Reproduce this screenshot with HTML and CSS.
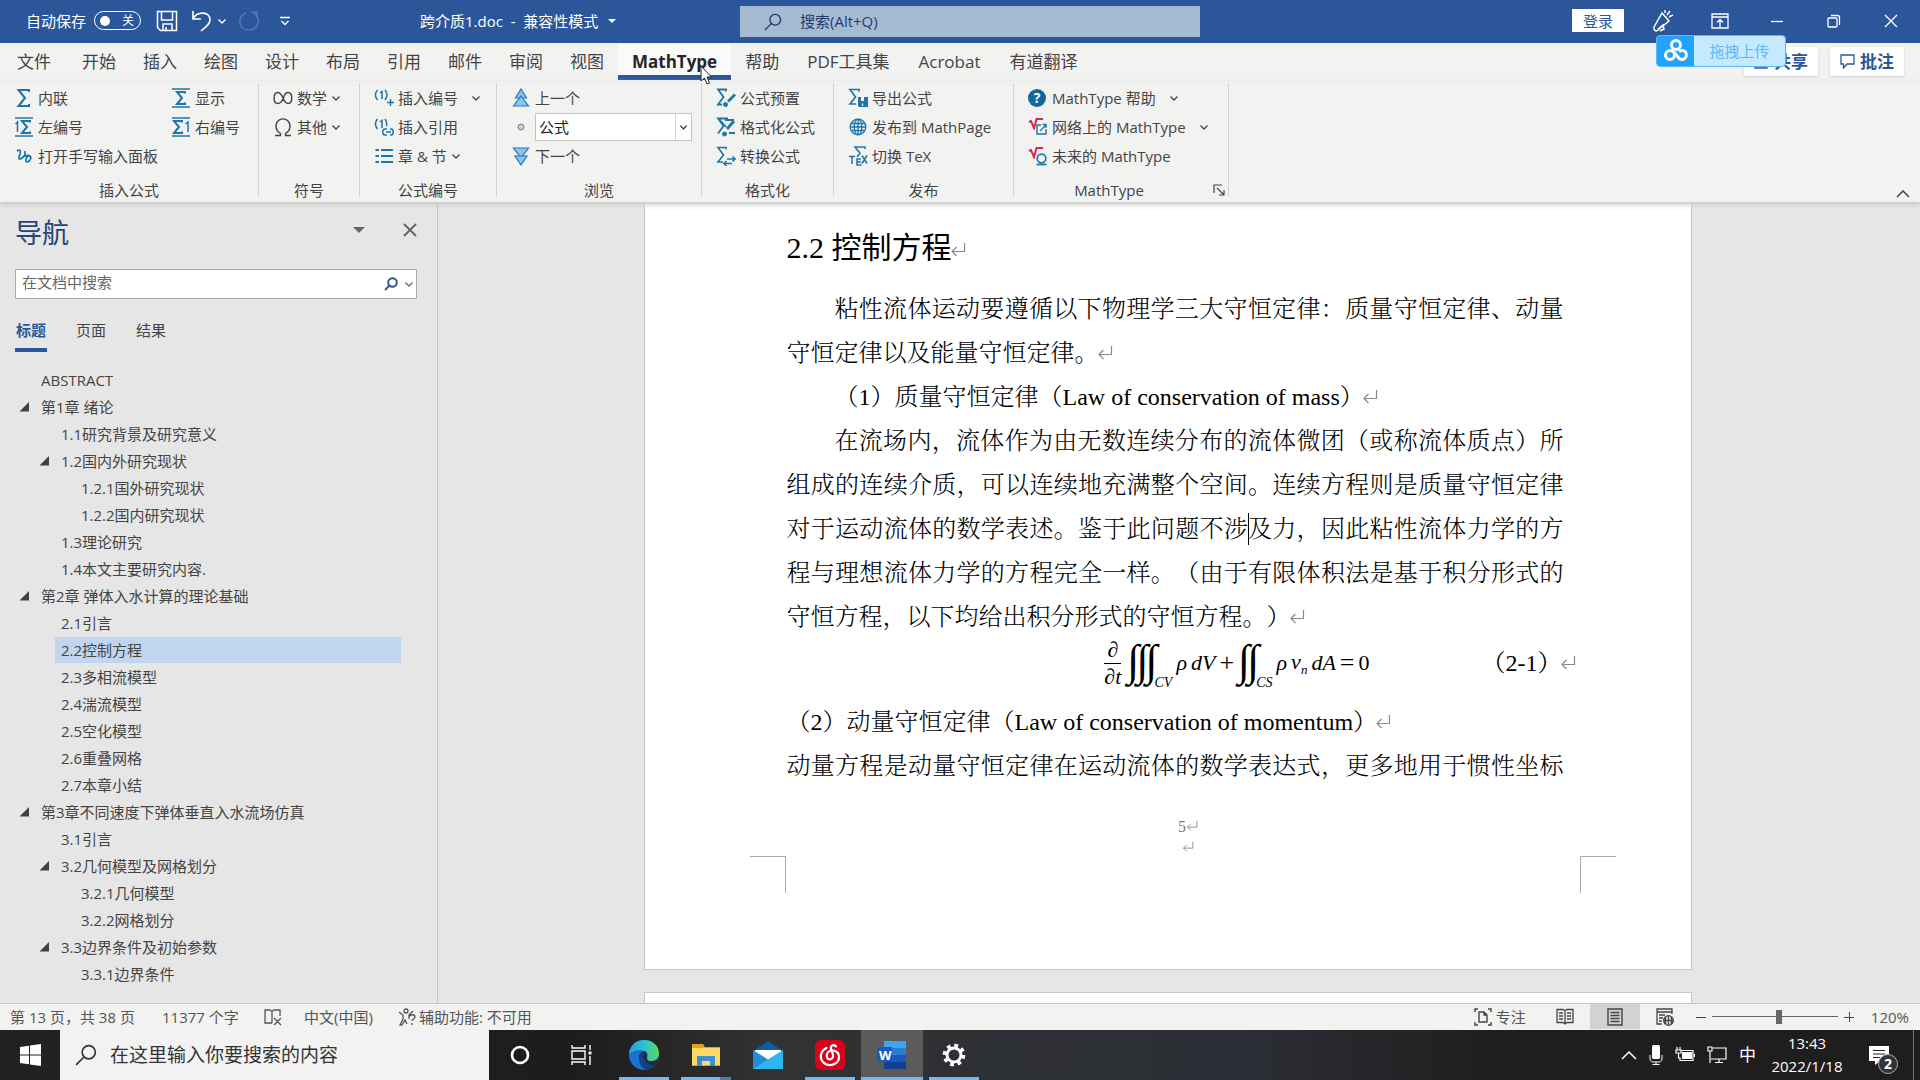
FILE: index.html
```html
<!DOCTYPE html>
<html lang="zh-CN">
<head>
<meta charset="utf-8">
<title>跨介质1.doc - Word</title>
<link rel="stylesheet" href="styles.css">
</head>
<body>
<svg class="defs" aria-hidden="true">
  <symbol id="chev" viewBox="0 0 10 10"><path d="M1.500 3.500 5 7l3.500-3.500" fill="none" stroke="currentColor" stroke-width="1.300"/></symbol>
  <symbol id="tri" viewBox="0 0 10 10"><path d="M0 2.500h10L5 7.500z" fill="currentColor"/></symbol>
  <symbol id="node" viewBox="0 0 10 10"><path d="M10 0v9.500H.5z" fill="#404040"/></symbol>
  <symbol id="lens" viewBox="0 0 20 20"><g fill="none" stroke="currentColor" stroke-width="1.500"><circle cx="12.500" cy="7.500" r="6"/><path d="M8.200 11.800 1 19"/></g></symbol>
  <symbol id="ret" viewBox="0 0 16 16"><g fill="none" stroke="#8a8a8a" stroke-width="1.200"><path d="M14.500 1v8.500H2"/><path d="M6.500 5 2 9.500 6.500 14"/></g></symbol>
  <symbol id="sigma" viewBox="0 0 20 20"><path d="M15 4V2H4.500l6.500 8-6.500 8H15v-2" fill="none" stroke="#1c77a8" stroke-width="2"/></symbol>
  <symbol id="sigbar" viewBox="0 0 20 20"><g fill="none" stroke="#1c77a8"><path d="M1 1h18M1 19h18" stroke-width="1.500"/><path d="M14 5.500V4H6l5 6-5 6h8v-1.500" stroke-width="2"/></g></symbol>
  <symbol id="sigleft" viewBox="0 0 20 20"><g fill="none" stroke="#1c77a8"><path d="M1 1h18M1 19h18" stroke-width="1.500"/><path d="M16 5.500V4H8l5 6-5 6h8v-1.500" stroke-width="2"/><path d="M1.500 7 3.500 5v10" stroke-width="1.500"/></g></symbol>
  <symbol id="sigright" viewBox="0 0 20 20"><g fill="none" stroke="#1c77a8"><path d="M1 1h18M1 19h18" stroke-width="1.500"/><path d="M11 5.500V4H3l5 6-5 6h8v-1.500" stroke-width="2"/><path d="M14.500 7 17 5v10" stroke-width="1.500"/></g></symbol>
  <symbol id="hand" viewBox="0 0 20 20"><g fill="none" stroke="#1c77a8" stroke-width="1.700"><path d="M3 5c3-2 4 0 3 3s-2 5 0 5 4-3 5-4"/><path d="M11 5v5c5-2 7 1 5 4s-5 2-4-1 3-4 4-2"/></g></symbol>
  <symbol id="inf" viewBox="0 0 20 20"><g fill="none" stroke="#444" stroke-width="1.400"><path d="M10 10C8 5.500 6.500 4.500 4.800 4.500c-5 0-5 11 0 11 3 0 5-3.500 6-6.500.8-3 2.500-4.500 4.200-4.500 5 0 5 11 0 11-2 0-3.500-2-5-5.500z"/></g></symbol>
  <symbol id="omega" viewBox="0 0 20 20"><path d="M2 18.500h5.500v-2C4 14.500 3 12 3 9c0-9.500 14-9.500 14 0 0 3-1 5.500-4.500 7.500v2H18" fill="none" stroke="#444" stroke-width="1.400"/></symbol>
  <symbol id="num" viewBox="0 0 20 20"><g fill="none" stroke="#1c77a8" stroke-width="1.500"><path d="M3.500 2c-2.500 3-2.500 7 0 10M11 2c2.500 3 2.500 7 0 10M6 5l2-1.500V11M16.500 11v7M13 14.500h7"/></g></symbol>
  <symbol id="numref" viewBox="0 0 20 20"><g fill="none" stroke="#1c77a8" stroke-width="1.500"><path d="M3.500 2c-2.500 3-2.500 7 0 10M11 2c1.500 2 2 4.500 1.500 7M6 5l2-1.500V11M13 12h-2c-3 0-3 6 0 6h2M16 12h1c3 0 3 6 0 6h-1M12 15h5"/></g></symbol>
  <symbol id="list" viewBox="0 0 20 20"><g stroke="#1c77a8"><path d="M7 4h12M7 10h12M7 16h12" stroke-width="2.200"/><path d="M1.500 4H5M1.500 10H5M1.500 16H5" stroke-width="2.200"/></g></symbol>
  <symbol id="up" viewBox="0 0 20 20"><g fill="#8cc4ec" stroke="#2877b5" stroke-width="1.200"><path d="m10 1 5.500 9h-11z"/><path d="m10 8 7.500 10h-15z"/></g></symbol>
  <symbol id="down" viewBox="0 0 20 20"><g fill="#8cc4ec" stroke="#2877b5" stroke-width="1.200"><path d="m10 12-7.500-10h15z"/><path d="m10 19-6-9h12z"/></g></symbol>
  <symbol id="dot" viewBox="0 0 20 20"><circle cx="10" cy="10" r="3" fill="#d0d0d0" stroke="#777"/></symbol>
  <symbol id="sigpen" viewBox="0 0 20 20"><g fill="none" stroke="#1c77a8"><path d="M10 3.500V1.500H2L7.500 9 2 16.500h4" stroke-width="1.800"/><path d="m19 6.500-7 7" stroke-width="2.800"/><circle cx="9.500" cy="16.500" r="2" fill="#1c77a8"/></g></symbol>
  <symbol id="sigfmt" viewBox="0 0 20 20"><g fill="none" stroke="#1c77a8"><path d="M12 1.500H2L7.500 9 2 16.500M3 2l7 8M9 3h9M13 16h6" stroke-width="1.800"/><path d="m18 4-7 8" stroke-width="2.800"/><circle cx="8.500" cy="17" r="2" fill="#1c77a8"/></g></symbol>
  <symbol id="sigconv" viewBox="0 0 20 20"><g fill="none" stroke="#1c77a8" stroke-width="1.600"><path d="M10 3.500V1.500H2L7.500 9 2 16h5M19 13h-8M8 17.500h8"/><path d="m16.500 10.500 2.500 2.500-2.500 2.500M10.500 15 8 17.500l2.500 2.500"/></g></symbol>
  <symbol id="export" viewBox="0 0 20 20"><path d="M11 3.500V1.500H2L7.500 9 2 16h6" fill="none" stroke="#1c77a8" stroke-width="1.700"/><path d="M10 9h3v4h3V9h4v10h-9l-1-1z" fill="#1c77a8"/><path d="M14.500 15.500V18" stroke="#fff" stroke-width="1.200"/></symbol>
  <symbol id="globe" viewBox="0 0 20 20"><g fill="none" stroke="#1c77a8" stroke-width="1.300"><circle cx="10" cy="10" r="7.800"/><ellipse cx="10" cy="10" rx="3.800" ry="7.800"/><path d="M10 2v16M3 6.500h14M3 13.500h14M2 10h16"/></g></symbol>
  <symbol id="tex" viewBox="0 0 20 20"><g fill="none" stroke="#1c77a8" stroke-width="1.500"><path d="M17 3V1H7l5 6-3 4M1 10.500h6M4 10.500V18M13 13H9v6h4.500M9 16h4M14 9.500l5 8M19 9.500l-5 8"/></g></symbol>
  <symbol id="mtsite" viewBox="0 0 20 20"><path d="m1 5 2-1 3 7 2.500-9H15" fill="none" stroke="#d9274f" stroke-width="2"/><g fill="none" stroke="#1c77a8" stroke-width="1.400"><path d="M13 8H9v9h9v-5M12 14l6-6M14.500 7.500H18V11"/></g></symbol>
  <symbol id="mtfuture" viewBox="0 0 20 20"><path d="m1 5 2-1 3 7 2.500-9H15" fill="none" stroke="#d9274f" stroke-width="2"/><g fill="none" stroke="#1c77a8" stroke-width="1.700"><circle cx="13.500" cy="12.500" r="4.300"/><path d="M8.500 18.500h10"/></g></symbol>
</svg>

<header class="titlebar">
  <div class="quick">
    <label class="autosave" for="autosave">自动保存
      <input type="checkbox" id="autosave"><span class="switch">关</span></label>
    <button class="bare q-save" aria-label="保存"><svg width="22" height="22" viewBox="0 0 22 22" fill="none" stroke="#fff" stroke-width="1.500"><path d="M1.500 1.500h19v19h-16l-3-3zM5.500 2v8h11V2M7 20v-6h9v6M10 20v-3"/></svg></button>
    <button class="bare q-undo" aria-label="撤消"><svg width="22" height="22" viewBox="0 0 22 22" fill="none" stroke="#fff" stroke-width="1.600"><path d="M2 1v8h8M2 9c4-8 17-8 17 1 0 4-4 7-9 11"/></svg><svg width="10" height="10"><use href="#chev"/></svg></button>
    <button class="bare q-redo" aria-label="重复" disabled><svg width="22" height="22" viewBox="0 0 22 22" fill="none" stroke="#4f78b8" stroke-width="1.600"><path d="M13 2h6v6M8 3C-1 6 0 20 11 20c10 0 12-12 5-17"/></svg></button>
    <button class="bare" aria-label="自定义"><svg width="10" height="12" viewBox="0 0 10 12" fill="none" stroke="#fff" stroke-width="1.300"><path d="M0 2.500h10M1.500 6 5 9.500 8.500 6"/></svg></button>
  </div>
  <button class="bare doc-name">跨介质1.doc&nbsp; - &nbsp;兼容性模式<svg width="8" height="8"><use href="#tri"/></svg></button>
  <label class="top-search"><svg width="18" height="18"><use href="#lens"/></svg><input type="text" placeholder="搜索(Alt+Q)" aria-label="搜索"></label>
  <div class="window-tools">
    <button class="login">登录</button>
    <button class="bare tool" aria-label="即将推出"><svg width="22" height="24" viewBox="0 0 22 24" fill="none" stroke="#fff" stroke-width="1.500"><path d="m10 4-8 14c-1 3 2 5 4 3l11-9zM6 20l5-4 1 4-4 2M13 4V1M15 6l3-4M17 8l4-2"/></svg></button>
    <button class="bare tool" aria-label="功能区显示选项"><svg width="18" height="18" viewBox="0 0 18 18" fill="none" stroke="#fff" stroke-width="1.300"><path d="M1 2h16v14H1zM1 5h16M9 15V8M6 10.500 9 7.500l3 3"/></svg></button>
    <button class="bare tool" aria-label="最小化"><svg width="14" height="14" stroke="#fff" stroke-width="1.300"><path d="M1 7.500h12"/></svg></button>
    <button class="bare tool" aria-label="还原"><svg width="14" height="14" viewBox="0 0 14 14" fill="none" stroke="#fff" stroke-width="1.300"><rect x="1" y="4" width="9" height="9" rx="1"/><path d="M4 1.500h6.500a2 2 0 0 1 2 2V11"/></svg></button>
    <button class="bare tool" aria-label="关闭"><svg width="14" height="14" stroke="#fff" stroke-width="1.400"><path d="m1 1 12 12M13 1 1 13"/></svg></button>
  </div>
</header>

<nav class="tabs">
  <a href="#" class="file">文件</a><a href="#">开始</a><a href="#">插入</a><a href="#">绘图</a><a href="#">设计</a><a href="#">布局</a><a href="#">引用</a><a href="#">邮件</a><a href="#">审阅</a><a href="#">视图</a><a href="#" class="active wide">MathType<svg class="cursor" width="12" height="20" viewBox="0 0 12 20"><path d="M1 1v15l3.500-3 2.500 6 2.500-1L7 12h4.500z" fill="#fff" stroke="#222"/></svg></a><a href="#">帮助</a><a href="#" class="wide">PDF工具集</a><a href="#" class="wide">Acrobat</a><a href="#" class="wide">有道翻译</a>
  <div class="tab-actions">
    <button class="action"><svg width="15" height="15" viewBox="0 0 15 15" fill="none" stroke="#2b579a" stroke-width="1.300"><path d="M5 4H1v10h12V9M5 9c1-4 4-5 8-5M10 1l3 3-3 3"/></svg>共享</button>
    <button class="action"><svg width="15" height="15" viewBox="0 0 15 15" fill="none" stroke="#2b579a" stroke-width="1.300"><path d="M1 1h13v9H7l-3.500 4v-4H1z"/></svg>批注</button>
    <button class="upload"><span class="upload-logo"><svg width="26" height="26" viewBox="0 0 26 26" fill="none" stroke="#fff" stroke-width="3"><circle cx="13" cy="7" r="4.500"/><circle cx="7" cy="17" r="4.500"/><path d="M16 13.500a4.500 4.500 0 1 1-1 5.500l-4-5"/></svg></span><span class="upload-text">拖拽上传</span></button>
  </div>
</nav>

<section class="ribbon">
  <div class="group g-insert"><div class="items two">
    <button><svg><use href="#sigma"/></svg>内联</button><button><svg><use href="#sigbar"/></svg>显示</button>
    <button><svg><use href="#sigleft"/></svg>左编号</button><button><svg><use href="#sigright"/></svg>右编号</button>
    <button><svg><use href="#hand"/></svg>打开手写输入面板</button></div><h2>插入公式</h2></div>
  <div class="group g-symbol"><div class="items">
    <button><svg><use href="#inf"/></svg>数学<svg class="chev"><use href="#chev"/></svg></button>
    <button><svg><use href="#omega"/></svg>其他<svg class="chev"><use href="#chev"/></svg></button></div><h2>符号</h2></div>
  <div class="group g-number"><div class="items">
    <button><svg><use href="#num"/></svg>插入编号<svg class="chev far"><use href="#chev"/></svg></button>
    <button><svg><use href="#numref"/></svg>插入引用</button>
    <button><svg><use href="#list"/></svg>章 &amp; 节<svg class="chev"><use href="#chev"/></svg></button></div><h2>公式编号</h2></div>
  <div class="group g-browse"><div class="items">
    <button><svg><use href="#up"/></svg>上一个</button>
    <label class="combo"><svg><use href="#dot"/></svg><select aria-label="浏览对象"><option>公式</option></select><svg class="chev"><use href="#chev"/></svg></label>
    <button><svg><use href="#down"/></svg>下一个</button></div><h2>浏览</h2></div>
  <div class="group g-format"><div class="items">
    <button><svg><use href="#sigpen"/></svg>公式预置</button>
    <button><svg><use href="#sigfmt"/></svg>格式化公式</button>
    <button><svg><use href="#sigconv"/></svg>转换公式</button></div><h2>格式化</h2></div>
  <div class="group g-publish"><div class="items">
    <button><svg><use href="#export"/></svg>导出公式</button>
    <button><svg><use href="#globe"/></svg>发布到 MathPage</button>
    <button><svg><use href="#tex"/></svg>切换 TeX</button></div><h2>发布</h2></div>
  <div class="group g-mt"><div class="items">
    <button><span class="help">?</span>MathType 帮助<svg class="chev far"><use href="#chev"/></svg></button>
    <button><svg><use href="#mtsite"/></svg>网络上的 MathType<svg class="chev far"><use href="#chev"/></svg></button>
    <button><svg><use href="#mtfuture"/></svg>未来的 MathType</button></div><h2>MathType</h2>
    <button class="bare launcher" aria-label="更多"><svg width="12" height="12" viewBox="0 0 12 12" fill="none" stroke="#444" stroke-width="1.200"><path d="M1 9V1h8M4 4l7 7M11 6v5H6"/></svg></button></div>
  <button class="bare collapse" aria-label="折叠功能区"><svg width="14" height="8" viewBox="0 0 14 8" fill="none" stroke="#444" stroke-width="1.500"><path d="m1 7 6-6 6 6"/></svg></button>
</section>

<main class="workspace">
  <aside class="nav-pane">
    <div class="nav-head"><h1>导航</h1>
      <button class="bare" aria-label="选项"><svg width="12" height="12"><use href="#tri"/></svg></button>
      <button class="bare nav-close" aria-label="关闭"><svg width="14" height="14" stroke="#666" stroke-width="2"><path d="m1 1 12 12M13 1 1 13"/></svg></button></div>
    <label class="nav-search"><input type="text" placeholder="在文档中搜索" aria-label="在文档中搜索"><svg class="nav-lens" width="14" height="14" viewBox="0 0 14 14" fill="none" stroke="#2b579a" stroke-width="2"><circle cx="8.500" cy="5.500" r="4.300"/><path d="M5.500 8.500 1 13"/></svg><svg width="10" height="10"><use href="#chev"/></svg></label>
    <div class="nav-tabs"><a href="#" class="active">标题</a><a href="#">页面</a><a href="#">结果</a></div>
    <ul class="tree">
      <li><a href="#">ABSTRACT</a></li>
      <li><svg><use href="#node"/></svg><a href="#">第1章 绪论</a></li>
      <li class="l2"><a href="#">1.1研究背景及研究意义</a></li>
      <li class="l2"><svg><use href="#node"/></svg><a href="#">1.2国内外研究现状</a></li>
      <li class="l3"><a href="#">1.2.1国外研究现状</a></li>
      <li class="l3"><a href="#">1.2.2国内研究现状</a></li>
      <li class="l2"><a href="#">1.3理论研究</a></li>
      <li class="l2"><a href="#">1.4本文主要研究内容.</a></li>
      <li><svg><use href="#node"/></svg><a href="#">第2章 弹体入水计算的理论基础</a></li>
      <li class="l2"><a href="#">2.1引言</a></li>
      <li class="l2"><a href="#" class="current">2.2控制方程</a></li>
      <li class="l2"><a href="#">2.3多相流模型</a></li>
      <li class="l2"><a href="#">2.4湍流模型</a></li>
      <li class="l2"><a href="#">2.5空化模型</a></li>
      <li class="l2"><a href="#">2.6重叠网格</a></li>
      <li class="l2"><a href="#">2.7本章小结</a></li>
      <li><svg><use href="#node"/></svg><a href="#">第3章不同速度下弹体垂直入水流场仿真</a></li>
      <li class="l2"><a href="#">3.1引言</a></li>
      <li class="l2"><svg><use href="#node"/></svg><a href="#">3.2几何模型及网格划分</a></li>
      <li class="l3"><a href="#">3.2.1几何模型</a></li>
      <li class="l3"><a href="#">3.2.2网格划分</a></li>
      <li class="l2"><svg><use href="#node"/></svg><a href="#">3.3边界条件及初始参数</a></li>
      <li class="l3"><a href="#">3.3.1边界条件</a></li>
    </ul>
  </aside>
  <div class="canvas">
    <article class="page">
      <h2>2.2 控制方程<svg class="ret"><use href="#ret"/></svg></h2>
      <p>粘性流体运动要遵循以下物理学三大守恒定律：质量守恒定律、动量守恒定律以及能量守恒定律。<svg class="ret"><use href="#ret"/></svg></p>
      <p>（1）质量守恒定律（Law of conservation of mass）<svg class="ret"><use href="#ret"/></svg></p>
      <p class="editing">在流场内，流体作为由无数连续分布的流体微团（或称流体质点）所组成的连续介质，可以连续地充满整个空间。连续方程则是质量守恒定律对于运动流体的数学表述。鉴于此问题不涉及力，因此粘性流体力学的方程与理想流体力学的方程完全一样。（由于有限体积法是基于积分形式的守恒方程，以下均给出积分形式的守恒方程。）<svg class="ret"><use href="#ret"/></svg><span class="caret"></span></p>
      <div class="equation">
        <div class="formula"><span class="frac"><i>∂</i><i>∂t</i></span><span class="int">∫∫∫</span><i class="low">CV</i><i>ρ</i><i>dV</i><span class="op">+</span><span class="int">∫∫</span><i class="low">CS</i><i>ρ</i><i class="v">v<small>n</small></i><i>dA</i><span class="op">=</span><span>0</span></div>
        <div class="eq-number">（2-1）<svg class="ret"><use href="#ret"/></svg></div>
      </div>
      <p class="flush">（2）动量守恒定律（Law of conservation of momentum）<svg class="ret"><use href="#ret"/></svg></p>
      <p class="flush fill">动量方程是动量守恒定律在运动流体的数学表达式，更多地用于惯性坐标</p>
      <footer><div>5<svg><use href="#ret"/></svg></div><div><svg><use href="#ret"/></svg></div></footer>
      <div class="crops"><span class="crop-l"></span><span class="crop-r"></span></div>
    </article>
    <div class="page next"></div>
  </div>
</main>

<div class="statusbar">
  <span class="s-pages">第 13 页，共 38 页</span><span class="s-words">11377 个字</span>
  <svg class="s-proof" width="18" height="18" viewBox="0 0 18 18" fill="none" stroke="#555" stroke-width="1.300"><path d="M8 15H1V2h5l2 1.500L10 2h6v6M8 3v12M10 10l7 7M17 10l-7 7"/></svg>
  <span class="s-lang">中文(中国)</span>
  <svg width="18" height="18" viewBox="0 0 18 18" fill="none" stroke="#555" stroke-width="1.300"><circle cx="8" cy="3" r="2"/><path d="m1 4 4 3v4l-3 6h2l3-5 2 4M15 3l-4 4v4M11 9c1-3 6-3 6 0 0 2-3 2-3 4M14 15v2"/></svg>
  <span class="s-access">辅助功能: 不可用</span>
  <div class="views">
    <button class="bare focus"><svg width="18" height="18" viewBox="0 0 18 18" fill="none" stroke="#444" stroke-width="1.400"><path d="M4 1H1v3M14 1h3v3M4 17H1v-3M14 17h3v-3M5 4h5l3 3v7H5zM10 4v3h3"/></svg>专注</button>
    <button class="bare view" aria-label="阅读视图"><svg width="18" height="17" viewBox="0 0 18 17" fill="none" stroke="#444" stroke-width="1.300"><path d="M1 1.500h6L9 3l2-1.500h6v13h-6L9 16l-2-1.500H1zM9 3v12M3 5h4M3 8h4M3 11h4M11 5h4M11 8h4M11 11h4"/></svg></button>
    <button class="bare view on" aria-label="页面视图"><svg width="16" height="18" viewBox="0 0 16 18" fill="none" stroke="#444" stroke-width="1.400"><path d="M1 1h14v16H1zM3.500 4.500h9M3.500 7.500h9M3.500 10.500h9M3.500 13.500h9"/></svg></button>
    <button class="bare view" aria-label="Web 版式"><svg width="18" height="18" viewBox="0 0 18 18" fill="none" stroke="#444" stroke-width="1.300"><path d="M6 16H1V1h15v5M1 4h15M3 7h6M3 10h4M3 13h3"/><circle cx="12.500" cy="12.500" r="4.800"/><path d="M7.500 12.500h10M12.500 8v9M10 9c-1 2-1 5 0 7M15 9c1 2 1 5 0 7"/></svg></button>
    <button class="bare zoom-step" aria-label="缩小"><svg width="10" height="10" stroke="#444"><path d="M0 5.500h10"/></svg></button>
    <input class="zoom" type="range" min="10" max="190" value="106" aria-label="缩放">
    <button class="bare zoom-step" aria-label="放大"><svg width="10" height="10" stroke="#444"><path d="M0 5.500h10M5.500 0v10"/></svg></button>
    <span class="percent">120%</span>
  </div>
</div>

<footer class="taskbar">
  <button class="bare start" aria-label="开始"><svg width="21" height="22" viewBox="0 0 21 22" fill="#fff"><path d="M0 3l9-1.200V10.500H0zM10 1.600 21 0v10.500H10zM0 11.500h9v8.700L0 19zM10 11.500h11V22l-11-1.600z"/></svg></button>
  <label class="task-search"><svg width="22" height="22"><use href="#lens"/></svg><input type="text" placeholder="在这里输入你要搜索的内容" aria-label="搜索"></label>
  <div class="apps">
    <button class="bare" aria-label="Cortana"><svg width="20" height="20"><circle cx="10" cy="10" r="8" fill="none" stroke="#fff" stroke-width="2.600"/></svg></button>
    <button class="bare" aria-label="任务视图"><svg width="22" height="20" viewBox="0 0 22 20" fill="none" stroke="#fff" stroke-width="1.400"><path d="M1 0v3h13V0M1 20v-3h13v3M1 6h13v8H1zM19 0v5M19 11v9"/><path d="M17.500 6.500h3v3h-3z" fill="#fff" stroke="none"/></svg></button>
    <button class="bare run" aria-label="Edge"><svg width="32" height="32" viewBox="0 0 32 32"><defs><linearGradient id="eg" x1="0" x2="1"><stop offset="0" stop-color="#1d9fe0"/><stop offset=".55" stop-color="#2fc3d0"/><stop offset="1" stop-color="#62d84e"/></linearGradient></defs><circle cx="16" cy="16" r="15" fill="#1673cf"/><path d="M1 15C2 6 8 1 16 1c9 0 15 6 15 13 0 5-4 8-8 8-3 0-5-1-4-3 4-7-9-12-18-4z" fill="url(#eg)"/><path d="M11 18c0-3 2-6 5-6 2 0 4 2 3 5-1 5 2 7 6 6 2 0 4-1 5-2-2 6-8 10-13 9-4-1-6-6-6-12z" fill="#123f88"/><path d="M15 15c0-3 5-2 4 2-1 4 2 6 6 5 2 0 4-1 6-3l1 4-4 3c-6 1-13-3-13-11z" fill="#2a2c2d"/></svg></button>
    <button class="bare run stack" aria-label="文件资源管理器"><svg width="28" height="24" viewBox="0 0 28 24"><path d="M0 1h11l2 3h15v19H0z" fill="#e6a318"/><path d="M0 5h28v17H0z" fill="#ffd968"/><path d="M5 13h18v10h-5v-5h-8v5H5z" fill="#3f8fd2"/></svg></button>
    <button class="bare" aria-label="邮件"><svg width="30" height="28" viewBox="0 0 30 28"><path d="M0 10 15 0l15 10z" fill="#0f5ca5"/><path d="M2 9h26v12H2z" fill="#fff"/><path d="M0 9v19h30z" fill="#1e8fdd"/><path d="m0 28 30-19v19z" fill="#2fb6f0"/></svg></button>
    <button class="bare run" aria-label="网易云音乐"><svg width="30" height="30" viewBox="0 0 30 30"><rect width="30" height="30" rx="6" fill="#dd001b"/><path d="M11.500 8C5 11 4 19 9 23c6 4.500 15 1 15-6 0-7-10-9-12-3-2 7 7 7 6 1L16 8.500C15.500 5 19 4 21 6.500" fill="none" stroke="#fff" stroke-width="2.200" stroke-linecap="round"/></svg></button>
    <button class="bare run sel" aria-label="Word"><span class="word"><svg width="30" height="28" viewBox="0 0 30 28"><path d="M7 0h22v7H7z" fill="#41a5ee"/><path d="M7 7h22v7H7z" fill="#2b7cd3"/><path d="M7 14h22v7H7z" fill="#185abd"/><path d="M7 21h22v7H7z" fill="#103f91"/><path d="M0 6h15v15H0z" fill="#185abd"/></svg><b>W</b></span></button>
    <button class="bare run" aria-label="设置"><svg width="24" height="24" viewBox="0 0 24 24" fill="none" stroke="#fff"><circle cx="12" cy="12" r="7" stroke-width="3"/><circle cx="12" cy="12" r="9.500" stroke-width="3.600" stroke-dasharray="3.700 3.760"/></svg></button>
  </div>
  <div class="tray">
    <button class="bare" aria-label="显示隐藏的图标"><svg width="16" height="10" fill="none" stroke="#fff" stroke-width="1.500"><path d="m1 9 7-7 7 7"/></svg></button>
    <svg width="14" height="20" viewBox="0 0 14 20"><rect x="3" width="8" height="14" rx="1.500" fill="#fff"/><path d="M1 10v4c0 2 2 3 3 3h6c1 0 3-1 3-3v-4M7 17v2.500M3.500 19.500h7" fill="none" stroke="#fff"/></svg>
    <svg width="20" height="16" viewBox="0 0 20 16" fill="none" stroke="#fff" stroke-width="1.200"><path d="M2 0v3M5 0v3M1 3h5v3H1zM3.500 6v5H5"/><path d="M6 3.500h12v10H5v-3M19.500 7v3"/><path d="M7.500 5.500h9v6h-9z" fill="#fff"/></svg>
    <svg width="20" height="18" viewBox="0 0 20 18" fill="none" stroke="#fff" stroke-width="1.200"><path d="M6 2h13v11H4M8 16.500h8M12 13v3M1 1h4v4H1zM3 5v12"/></svg>
    <span class="ime">中</span>
    <div class="clock"><span>13:43</span><span>2022/1/18</span></div>
    <button class="bare notice" aria-label="通知"><svg width="20" height="20" viewBox="0 0 20 20"><path d="M0 1h20v15h-9l-5 4v-4H0z" fill="#fff"/><path d="M4 5.500h12M4 9h12M4 12.500h7" stroke="#222" stroke-width="1.200"/></svg><span>2</span></button>
  </div>
</footer>
</body>
</html>
```
FILE: styles.css
```css
* { box-sizing: border-box; }
body {
  margin: 0; height: 100vh; display: flex; flex-direction: column; overflow: hidden;
  background: #e6e6e6; color: #444;
  font: 15px/20px "Open Sans", "Noto Sans CJK SC", sans-serif;
}
button, input, select { font: inherit; color: inherit; margin: 0; }
h1, h2, p, ul { margin: 0; padding: 0; font-weight: 400; }
a { color: inherit; text-decoration: none; }
svg { flex: none; }
.defs { position: absolute; width: 0; height: 0; }
.bare { border: 0; background: none; padding: 0; display: flex; align-items: center; justify-content: center; }

/* title bar */
.titlebar { height: 43px; flex: none; background: #2b579a; color: #fff; display: flex; align-items: center; padding-bottom: 2px; }
.quick { display: flex; align-items: center; width: 420px; padding-left: 26px; }
.autosave { display: flex; align-items: center; gap: 8px; margin-right: 15px; }
.autosave input { position: absolute; opacity: 0; }
.switch { width: 47px; height: 19px; border: 1px solid #fff; border-radius: 10px; display: flex; align-items: center; justify-content: space-between; padding: 0 6px 0 5px; font-size: 12px; }
.switch::before { content: ""; width: 10px; height: 10px; border-radius: 5px; background: #fff; }
.q-save { margin-right: 13px; }
.q-undo { gap: 4px; margin-right: 11px; }
.q-redo { margin-right: 20px; }
.doc-name { width: 320px; justify-content: flex-start; gap: 10px; }
.top-search { width: 460px; height: 31px; margin-top: 2px; background: #a7bad4; color: #1e3a6e; display: flex; align-items: center; padding-left: 24px; gap: 18px; }
.top-search input { border: 0; background: none; flex: 1; outline: 0; padding: 0 0 2px; }
input::placeholder { color: inherit; opacity: 1; }
.window-tools { margin-left: auto; display: flex; align-items: center; padding-right: 1px; }
.login { width: 52px; height: 23px; border: 0; padding: 0; background: #fff; color: #2b579a; line-height: 22px; margin-right: 10px; }
.tool { width: 57px; height: 41px; }

/* ribbon tabs */
.tabs { height: 38px; flex: none; background: #f2f2f1; display: flex; gap: 1px; padding-left: 4px; font-size: 17px; position: relative; }
.tabs > a { padding: 0 13px; line-height: 38px; height: 37px; white-space: nowrap; }
.tabs .file { margin-right: 4px; }
.tabs > .wide { padding: 0 14px; }
.tabs .active { background: #fafafa; color: #262626; font-weight: 700; border-bottom: 5px solid #2b579a; position: relative; }
.cursor { position: absolute; left: 82px; top: 22px; z-index: 2; }
.tab-actions { margin-left: auto; padding: 4px 16px 0 0; display: flex; gap: 12px; align-items: flex-start; position: relative; }
.action { width: 74px; height: 29px; border: 0; padding: 0; background: #fff; box-shadow: 0 1px 2px #ccc; color: #2b579a; font-weight: 700; display: flex; align-items: center; justify-content: center; gap: 5px; }
.upload { position: absolute; right: 134px; top: -8px; width: 130px; height: 32px; padding: 0; border: 1px solid #5ab6f7; border-radius: 4px; background: #c5eaff; display: flex; overflow: hidden; font-size: 15px; color: #62b8f2; }
.upload-logo { width: 37px; height: 30px; background: #22a2fb; display: grid; place-items: center; }
.upload-text { flex: 1; line-height: 30px; }

/* ribbon groups */
.ribbon { height: 122px; flex: none; background: #f2f2f1; border-bottom: 1px solid #cfcfcf; display: flex; position: relative; z-index: 1; box-shadow: 0 2px 5px #ccc; }
.group { margin: 2px 0 6px; border-right: 1px solid #d2d2d2; padding-left: 14px; position: relative; }
.items { display: grid; grid-template-rows: repeat(3, 29px); justify-items: start; }
.items.two { grid-template-columns: 157px 1fr; }
.items button, .combo { border: 0; background: none; padding: 0; display: flex; align-items: center; gap: 4px; white-space: nowrap; }
.items svg { width: 20px; height: 20px; }
.items .chev { width: 10px; height: 10px; }
.items .far { margin-left: 9px; }
.group h2 { font-size: 15px; line-height: 24px; margin: 8px 14px 0 0; text-align: center; }
.g-insert { width: 259px; }
.g-symbol { width: 101px; }
.g-number { width: 137px; }
.g-browse { width: 205px; }
.g-format { width: 132px; }
.g-publish { width: 180px; }
.g-mt { width: 215px; }
.g-mt h2 { margin-right: 38px; }
.combo { position: relative; color: #222; }
.combo select { appearance: none; width: 157px; height: 28px; border: 1px solid #c4c4c4; background: #fff; padding: 0 3px; line-height: 24px; border-radius: 0; }
.combo .chev { position: absolute; right: 1px; width: 16px; height: 26px; padding: 0 3px; border-left: 1px solid #d2d2d2; }
.help { width: 18px; height: 18px; margin-right: 2px; border-radius: 9px; background: #13689a; color: #fff; font: 700 14px/18px "Open Sans", sans-serif; text-align: center; }
.launcher { position: absolute; right: 3px; bottom: 0; }
.collapse { margin: auto 10px 4px auto; }

/* navigation pane */
.workspace { flex: 1; min-height: 0; display: flex; }
.nav-pane { width: 438px; flex: none; border-right: 1px solid #c4c4c4; padding: 9px 0 0 15px; overflow: hidden; }
.nav-head { display: flex; align-items: center; color: #666; height: 36px; }
.nav-head h1 { font-size: 27px; line-height: 36px; padding-top: 6px; color: #264478; flex: 1; }
.nav-close { margin: 0 20px 0 38px; }
.nav-search { display: flex; align-items: center; gap: 6px; width: 402px; height: 30px; margin-top: 21px; background: #fff; border: 1px solid #ababab; padding: 0 2px 0 6px; color: #666; }
.nav-search input { flex: 1; border: 0; padding: 0 0 4px; outline: 0; background: none; }
.nav-tabs { display: flex; gap: 28px; margin-top: 20px; line-height: 22px; }
.nav-tabs a { padding: 0 1px 7px; border-bottom: 4px solid transparent; }
.nav-tabs .active { color: #2b579a; font-weight: 700; border-color: #2b579a; }
.tree { list-style: none; margin-top: 14px; }
.tree li { display: flex; align-items: center; height: 27px; padding-left: 20px; }
.tree .l2 { padding-left: 40px; }
.tree .l3 { padding-left: 60px; }
.tree svg { width: 10px; height: 10px; margin-left: -16px; }
.tree a { flex: 1; padding-left: 6px; line-height: 26px; margin-right: 36px; }
.tree svg + a { margin-left: 6px; }
.tree .current { background: #c2d5f0; }

/* document */
.canvas { flex: 1; min-width: 0; display: flex; flex-direction: column; align-items: center; gap: 22px; padding-right: 23px; overflow: hidden; }
.page { width: 1048px; height: 767px; flex: none; background: #fff; border: 1px solid #c6c6c6; border-top: 0; padding: 24px 127px 0 142px; color: #000; font: 24px/44px "Liberation Serif", "Noto Serif CJK SC", "Noto Sans CJK SC", serif; text-spacing-trim: space-all; }
.page.next { border-top: 1px solid #c6c6c6; height: 200px; }
.page h2 { font: 400 30px/42px "Liberation Serif", "Noto Sans CJK SC", sans-serif; margin-bottom: 18px; }
.page p { text-align: justify; text-indent: 48px; font-weight: 300; }
.page .flush { text-indent: 0; }
.page .fill { text-align-last: justify; }
.ret { width: 16px; height: 16px; margin-left: -2px; }
.editing { position: relative; }
.caret { position: absolute; left: 461px; top: 94px; width: 1px; height: 32px; background: #000; }
.equation { height: 48px; margin-bottom: 13px; display: flex; align-items: center; justify-content: flex-end; line-height: 26px; }
.formula { display: flex; align-items: center; gap: 4px; font-size: 22px; margin-right: 112px; }
.frac { display: grid; text-align: center; padding-right: 2px; }
.frac i:first-child { border-bottom: 1px solid #000; }
.int { font-size: 44px; line-height: 44px; height: 48px; letter-spacing: -3px; }
.low { font-size: 14px; align-self: flex-end; line-height: 14px; margin-left: -4px; }
.op { font-size: 26px; }
.v small { font-size: 13px; vertical-align: sub; line-height: 1; }
.eq-number { margin-right: -12px; white-space: nowrap; }
.page footer { margin-top: 28px; padding-left: 26px; text-align: center; font-size: 16px; line-height: 21px; color: #777; }
.page footer svg { width: 12px; height: 12px; }
.crops { display: flex; justify-content: space-between; margin: -2px -52px 0 -37px; }
.crops span { width: 36px; height: 37px; border-top: 1px solid #aaa; }
.crop-l { border-right: 1px solid #aaa; }
.crop-r { border-left: 1px solid #aaa; }

/* status bar */
.statusbar { height: 27px; flex: none; background: #f2f2f1; border-top: 1px solid #c6c6c6; display: flex; align-items: center; padding: 0 0 1px 10px; white-space: nowrap; color: #555; }
.s-pages { width: 152px; }
.s-words { width: 102px; }
.s-proof { margin-right: 22px; }
.s-lang { width: 94px; }
.s-access { margin-left: 3px; }
.views { margin-left: auto; display: flex; align-items: center; height: 100%; padding-right: 11px; }
.focus { gap: 4px; margin-right: 14px; }
.view { width: 50px; height: 100%; }
.view.on { background: #d2d2d2; }
.zoom-step { margin: 0 6px 0 6px; }
.zoom { appearance: none; width: 126px; height: 16px; background: linear-gradient(#666, #666) center / 100% 1px no-repeat; }
.zoom::-webkit-slider-thumb { appearance: none; width: 6px; height: 14px; background: #666; }
.percent { margin-left: 11px; }

/* taskbar */
.taskbar { height: 50px; flex: none; background: linear-gradient(90deg, #222 0, #1e1c1c 30%, #303233 40%, #2b2e35 65%, #201d1e 78%); color: #fff; display: flex; }
.start { width: 60px; }
.task-search { width: 429px; background: #f2f2f2; color: #333; display: flex; align-items: center; gap: 13px; padding-left: 15px; font-size: 19px; }
.task-search input { flex: 1; border: 0; background: none; outline: 0; padding: 0; }
.apps { display: flex; }
.apps button { width: 62px; height: 50px; position: relative; }
.apps .run::after { content: ""; position: absolute; inset: auto 6px 0; height: 3px; background: #76b9ed; }
.apps .stack::after { background: linear-gradient(90deg, #76b9ed 78%, #557c9c 78%); }
.apps .sel { background: #5b5b5b; }
.apps .sel::after { left: 0; right: 0; }
.word { position: relative; display: grid; }
.word b { position: absolute; left: 2px; top: 4px; font-size: 13px; }
.tray { margin-left: auto; display: flex; align-items: center; gap: 12px; padding-right: 6px; }
.ime { font-size: 17px; }
.clock { width: 82px; display: grid; text-align: center; line-height: 23px; padding-right: 4px; }
.notice { position: relative; width: 52px; height: 50px; border-right: 1px solid #777; padding-right: 18px; }
.notice span { position: absolute; left: 16px; top: 24px; width: 20px; height: 20px; border: 1px solid #aaa; border-radius: 10px; background: #333; font-weight: 700; line-height: 18px; font-size: 14px; }
```
